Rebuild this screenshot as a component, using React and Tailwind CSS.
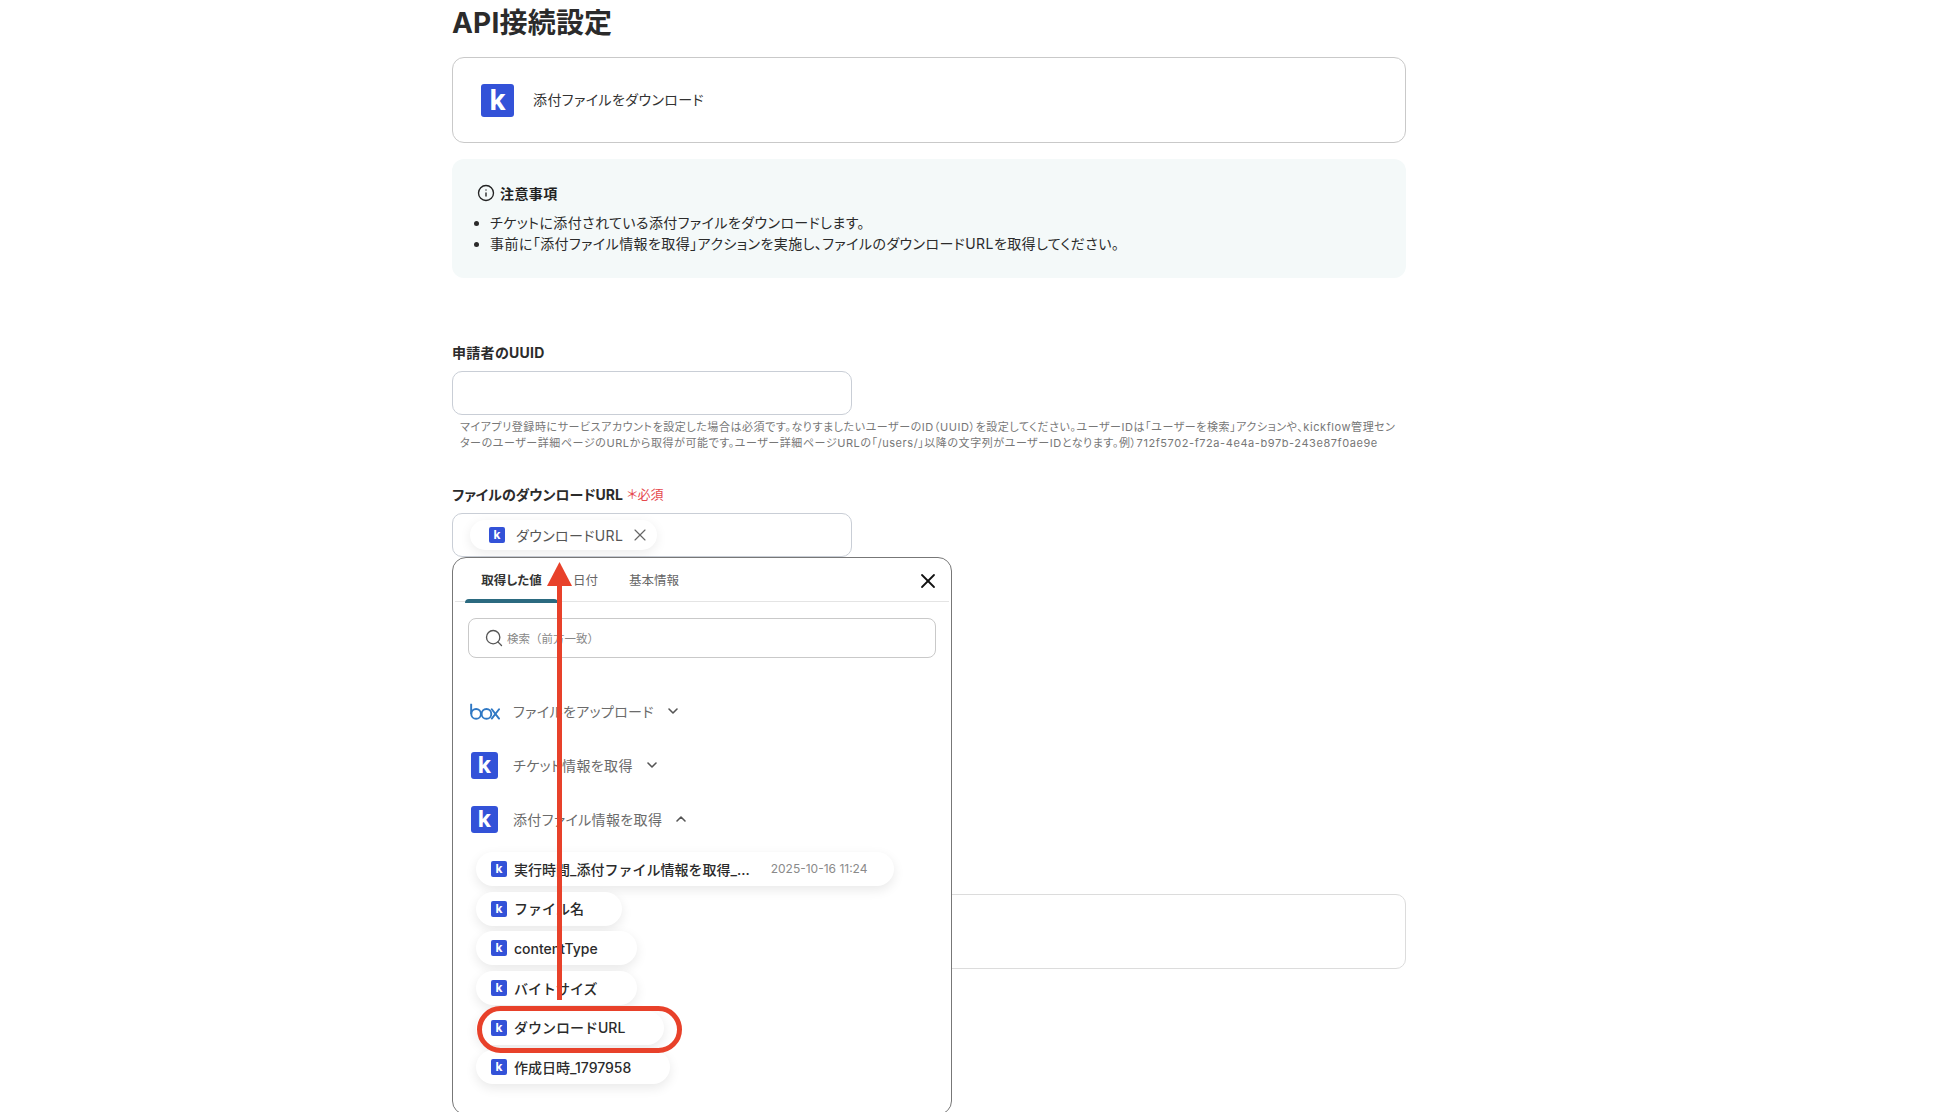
import React from "react";
import { X, ChevronDown, ChevronUp, Search, Info } from "lucide-react";

const K = ({ size = 16, text = 12, radius = 2 }) => (
  <span
    className="flex shrink-0 items-center justify-center bg-[#3352d8] text-white font-bold leading-none tracking-normal"
    style={{ width: size, height: size, fontSize: text, borderRadius: radius }}
  >
    k
  </span>
);

const BoxLogo = () => (
  <svg width="30" height="17" viewBox="0 0 31 17" fill="none" stroke="#2f78c4" strokeWidth="2" className="-ml-[1px] shrink-0">
    <path d="M1.2 0.5V11" />
    <circle cx="6.3" cy="11" r="5" />
    <circle cx="17" cy="11" r="5" />
    <path d="M22.5 6.2L30 15.8M30 6.2L22.5 15.8" strokeLinecap="round" />
  </svg>
);

const Chip = ({ w, label, date }) => (
  <div
    className="flex h-[34px] items-center rounded-full bg-white pl-[15px] shadow-[0_4px_12px_rgba(0,0,0,0.09)] [font-feature-settings:normal]"
    style={{ width: w }}
  >
    <K />
    <span className="ml-[7px] whitespace-nowrap text-[14px] font-medium text-[#2b2b2b]">{label}</span>
    {date && <span className="ml-[21px] whitespace-nowrap text-[12px] text-[#8a8a8a]">{date}</span>}
  </div>
);

const Group = ({ icon, label, up }) => (
  <div className="flex h-[54px] items-center">
    <div className="flex w-[45px] justify-start pl-[3px]">{icon}</div>
    <span className="whitespace-nowrap text-[14px] tracking-[0.35px] text-[#6b6b6b]">{label}</span>
    {up ? (
      <ChevronUp size={16} strokeWidth={2.4} className="ml-[11px] text-[#555]" />
    ) : (
      <ChevronDown size={16} strokeWidth={2.4} className="ml-[11px] text-[#555]" />
    )}
  </div>
);

export default function App() {
  return (
    <div className="relative h-[1112px] w-full overflow-hidden bg-white font-['Inter','Noto_Sans_CJK_JP',sans-serif] text-[#2b2b2b] [font-feature-settings:'palt']">
      <div className="ml-[452px] w-[954px] pt-[2px]">
        <h1 className="h-[42px] text-[28px] font-bold leading-[42px] tracking-[0.2px] text-[#2b2b2b]">API接続設定</h1>

        <div className="mt-[13px] flex h-[86px] items-center rounded-[12px] border border-[#c9c9c9] pl-[28px]">
          <K size={33} text={28} radius={3} />
          <span className="ml-[19px] -translate-y-[1px] text-[14px] tracking-[0.4px] text-[#333]">添付ファイルをダウンロード</span>
        </div>

        <div className="mt-[16px] h-[119px] rounded-[12px] bg-[#f4f9f9] pl-[25px] pt-[25px]">
          <div className="flex h-[18px] items-center">
            <Info size={18} strokeWidth={1.8} className="text-[#222]" />
            <span className="ml-[5px] text-[14px] font-bold tracking-[0.4px] text-[#222]">注意事項</span>
          </div>
          <ul className="-ml-[1px] mt-[10px] list-disc pl-[14px] text-[14px] leading-[21px] tracking-[0.42px] text-[#2b2b2b]">
            <li>チケットに添付されている添付ファイルをダウンロードします。</li>
            <li>事前に「添付ファイル情報を取得」アクションを実施し、ファイルのダウンロードURLを取得してください。</li>
          </ul>
        </div>

        <div className="mt-[65px] h-[20px] text-[14px] font-bold leading-[20px] tracking-[0.3px] text-[#2b2b2b]">申請者のUUID</div>
        <div className="mt-[8px] h-[44px] w-[400px] rounded-[10px] border border-[#c9ced6]"></div>
        <p className="ml-[8px] mt-[4px] whitespace-nowrap text-[11px] leading-[16px] tracking-[0.57px] text-[#777]">
          マイアプリ登録時にサービスアカウントを設定した場合は必須です。なりすましたいユーザーのID（UUID）を設定してください。ユーザーIDは「ユーザーを検索」アクションや、kickflow管理セン
          <br />
          ターのユーザー詳細ページのURLから取得が可能です。ユーザー詳細ページURLの「/users/」以降の文字列がユーザーIDとなります。例）712f5702-f72a-4e4a-b97b-243e87f0ae9e
        </p>

        <div className="mt-[33px] flex h-[20px] items-center text-[14px] font-bold text-[#2b2b2b]">
          ファイルのダウンロードURL
          <span className="ml-[4px] translate-y-[1px] text-[13px] font-normal text-[#e5484d]">＊必須</span>
        </div>

        <div className="relative mt-[9px]">
          <div className="flex h-[44px] w-[400px] items-center rounded-[10px] border border-[#c9ced6] pl-[17px]">
            <div className="flex h-[30px] w-[187px] items-center rounded-full bg-white pl-[19px] shadow-[0_3px_12px_rgba(0,0,0,0.08)]">
              <K />
              <span className="ml-[11px] whitespace-nowrap text-[14px] tracking-[0.4px] text-[#555]">ダウンロードURL</span>
              <X size={20} strokeWidth={1.4} className="ml-[7px] text-[#666]" />
            </div>
          </div>

          <div className="absolute left-0 top-full z-10 h-[558px] w-[500px] rounded-[14px] border border-[#777] bg-white px-[2px]">
            <div className="flex h-[44px] items-center border-b border-[#e4e4e4]">
              <div className="relative ml-[10px] flex h-[44px] w-[93px] items-center justify-center pt-[4px] text-[12.5px] font-bold text-[#333]">
                取得した値
                <div className="absolute bottom-[-1px] left-0 right-0 h-[4px] rounded-t-[4px] bg-[#2b6a80]"></div>
              </div>
              <span className="ml-[15px] pt-[4px] text-[12.5px] text-[#666]">日付</span>
              <span className="ml-[31px] pt-[4px] text-[12.5px] text-[#666]">基本情報</span>
              <X size={24} strokeWidth={1.8} className="ml-auto mr-[9px] mt-[3px] text-[#111]" />
            </div>

            <div className="ml-[13px] mt-[16px] flex h-[40px] w-[468px] items-center rounded-[8px] border border-[#c9c9c9] pl-[15px]">
              <Search size={20} strokeWidth={1.6} className="text-[#555]" />
              <span className="ml-[3px] pt-[4px] text-[11.5px] text-[#888] [font-feature-settings:normal]">検索（前方一致）</span>
            </div>

            <div className="ml-[13px] mt-[26px]">
              <Group icon={<BoxLogo />} label="ファイルをアップロード" />
              <Group icon={<K size={27} text={23} radius={3} />} label="チケット情報を取得" />
              <Group icon={<K size={27} text={23} radius={3} />} label="添付ファイル情報を取得" up />
            </div>

            <div className="ml-[21px] mt-[6px] flex flex-col gap-[5.7px]">
              <Chip w={418} label="実行時間_添付ファイル情報を取得_..." date="2025-10-16 11:24" />
              <Chip w={146} label="ファイル名" />
              <Chip w={161} label="contentType" />
              <Chip w={161} label="バイトサイズ" />
              <Chip w={188} label="ダウンロードURL" />
              <Chip w={194} label="作成日時_1797958" />
            </div>
          </div>
        </div>

        <div className="mt-[337px] h-[75px] rounded-[10px] border border-[#dcdcdc]"></div>
      </div>

      {/* annotations drawn over the screenshot */}
      <div className="absolute left-[477px] top-[1006px] z-20 h-[47px] w-[205px] rounded-full border-[5px] border-[#e8412a]"></div>
      <svg className="absolute left-[545px] top-[560px] z-20" width="30" height="444" viewBox="0 0 30 444">
        <path d="M14.5 2L27 26H2Z" fill="#e8412a" />
        <rect x="12" y="24" width="5" height="416" fill="#e8412a" />
      </svg>
    </div>
  );
}
